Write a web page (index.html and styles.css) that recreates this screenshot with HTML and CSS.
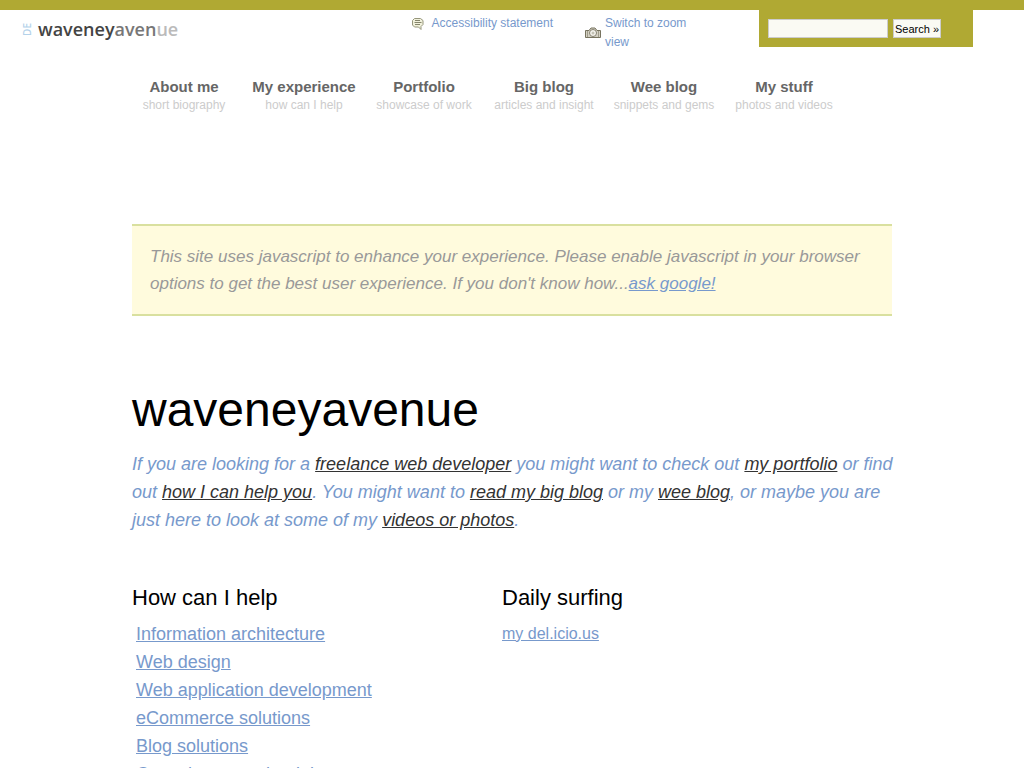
FILE: index.html
```
<!DOCTYPE html>
<html lang="en">
<head>
  <meta charset="UTF-8">
  <meta name="viewport" content="width=device-width, initial-scale=1.0">
  <title>waveneyavenue</title>
  <link rel="stylesheet" href="styles.css">
</head>
<body>
  <header class="top">
    <a class="logo" href="#" aria-label="DE waveneyavenue">
      <span class="logo-de">DE</span>
      <span class="logo-name">waveney<span class="logo-mid">aven</span><span class="logo-end">ue</span></span>
    </a>
    <ul class="tools">
      <li>
        <svg class="icon-note" width="14" height="14" viewBox="0 0 14 14">
          <path d="M3.500 1.500h6l2.500 2v4L10 9.500v3L7.500 10h-4L1.500 8V3.500z" fill="#f1f1dc" stroke="#96967c"/>
          <path d="M4 3.500h5M3.500 5.500h7M4 7.500h5" stroke="#85856b"/>
        </svg>
        <a href="#">Accessibility statement</a>
      </li>
      <li class="tool-zoom">
        <svg class="icon-camera" width="16" height="12" viewBox="0 0 16 12">
          <path d="M.5 3.500h3.500l2-2.500h4l2 2.500h3.500v7H.5z" fill="#d3d0c3" stroke="#77735f"/>
          <path d="M2.500 4v6M13.500 4v6" stroke="#a19d8c"/>
          <circle cx="8" cy="6" r="3.500" fill="#f7f6f0" stroke="#858170"/>
          <circle cx="8" cy="6" r="1.500" fill="#c4c2b5"/>
        </svg>
        <a href="#">Switch to zoom view</a>
      </li>
    </ul>
    <form class="search" action="#">
      <input type="text" name="q" aria-label="Search">
      <button type="submit">Search »</button>
    </form>
  </header>

  <div class="container">
    <nav>
      <ul class="menu">
        <li><a href="#">About me <span>short biography</span></a></li>
        <li><a href="#">My experience <span>how can I help</span></a></li>
        <li><a href="#">Portfolio <span>showcase of work</span></a></li>
        <li><a href="#">Big blog <span>articles and insight</span></a></li>
        <li><a href="#">Wee blog <span>snippets and gems</span></a></li>
        <li><a href="#">My stuff <span>photos and videos</span></a></li>
      </ul>
    </nav>

    <p class="notice">This site uses javascript to enhance your experience. Please enable javascript in your browser options to get the best user experience. If you don't know how...<a href="#">ask google!</a></p>

    <h1>waveneyavenue</h1>
    <p class="intro">If you are looking for a <a href="#">freelance web developer</a> you might want to check out <a href="#">my portfolio</a> or find out <a href="#">how I can help you</a>. You might want to <a href="#">read my big blog</a> or my <a href="#">wee blog</a>, or maybe you are just here to look at some of my <a href="#">videos or photos</a>.</p>

    <div class="columns">
      <section>
        <h2>How can I help</h2>
        <ul class="services">
          <li><a href="#">Information architecture</a></li>
          <li><a href="#">Web design</a></li>
          <li><a href="#">Web application development</a></li>
          <li><a href="#">eCommerce solutions</a></li>
          <li><a href="#">Blog solutions</a></li>
          <li><a href="#">Consultancy and training</a></li>
        </ul>
      </section>
      <section>
        <h2>Daily surfing</h2>
        <a class="surf" href="#">my del.icio.us</a>
      </section>
    </div>
  </div>
</body>
</html>
```
FILE: styles.css
```
body {
  margin: 0;
  border-top: 10px solid #b0a933;
  background-color: #fff;
  color: #000;
  font-family: "Liberation Sans", Arial, sans-serif;
}
a {
  color: #7799cc;
}
ul {
  list-style: none;
  margin: 0;
  padding: 0;
}

/* top bar */
.top {
  display: flex;
  align-items: flex-start;
  height: 37px;
  padding: 0 51px 0 22px;
}
.logo {
  display: flex;
  align-items: center;
  gap: 5px;
  margin-top: 8px;
  text-decoration: none;
}
.logo-de {
  writing-mode: vertical-rl;
  transform: rotate(180deg);
  font: 600 10px/11px "Open Sans", sans-serif;
  color: #b4d2ea;
}
.logo-name {
  font: 600 18px/22px "Open Sans", sans-serif;
  color: #444;
}
.logo-mid {
  color: #777;
}
.logo-end {
  color: #bbb;
}
.tools {
  display: flex;
  gap: 32px;
  margin-left: auto;
  margin-right: 60px;
  font-size: 12px;
  line-height: 19px;
}
.tools li {
  display: flex;
  gap: 7px;
  margin-top: 4px;
}
.tools a {
  text-decoration: none;
}
.icon-note {
  margin-top: 3px;
}
.tool-zoom {
  width: 114px;
  align-items: center;
}
.tools .tool-zoom {
  gap: 4px;
}
.icon-camera {
  flex: none;
}
.search {
  display: flex;
  align-items: flex-start;
  gap: 5px;
  width: 205px;
  height: 28px;
  padding: 9px 0 0 9px;
  background-color: #b0a933;
}
.search input,
.search button {
  height: 19px;
  box-sizing: border-box;
  border: 1px solid #ccc;
  background-color: #fafaf3;
  font: 11px "Liberation Sans", Arial, sans-serif;
}
.search input {
  width: 120px;
}
.search button {
  padding: 0 1px;
  color: #000;
}

.container {
  max-width: 762px;
  margin: 0 auto;
  padding-left: 2px;
}

/* menu */
.menu {
  display: flex;
  margin: 30px 0 110px -8px;
}
.menu li {
  width: 120px;
  text-align: center;
}
.menu a {
  display: block;
  color: #666;
  font-size: 15px;
  font-weight: bold;
  line-height: 19px;
  text-decoration: none;
}
.menu span {
  display: block;
  color: #ccc;
  font-size: 12px;
  font-weight: normal;
  line-height: 18px;
}

.notice {
  margin: 0 2px 0 0;
  padding: 17px 18px;
  border-top: 2px solid #d9e09f;
  border-bottom: 2px solid #d9e09f;
  background-color: #fffbdd;
  color: #999;
  font-size: 17px;
  font-style: italic;
  line-height: 27px;
}

h1 {
  margin: 64px 0 10px;
  font-size: 48px;
  font-weight: normal;
  line-height: 60px;
}
.intro {
  margin: 0;
  color: #7799cc;
  font-size: 18px;
  font-style: italic;
  line-height: 28px;
}
.intro a {
  color: #333;
}

/* bottom columns */
.columns {
  display: grid;
  grid-template-columns: 370px 1fr;
  margin-top: 49px;
}
h2 {
  margin: 0 0 7px;
  font-size: 22px;
  font-weight: normal;
  line-height: 30px;
}
.services {
  padding-left: 4px;
  font-size: 18px;
  line-height: 28px;
}
.surf {
  font-size: 16px;
  line-height: 28px;
}
```
